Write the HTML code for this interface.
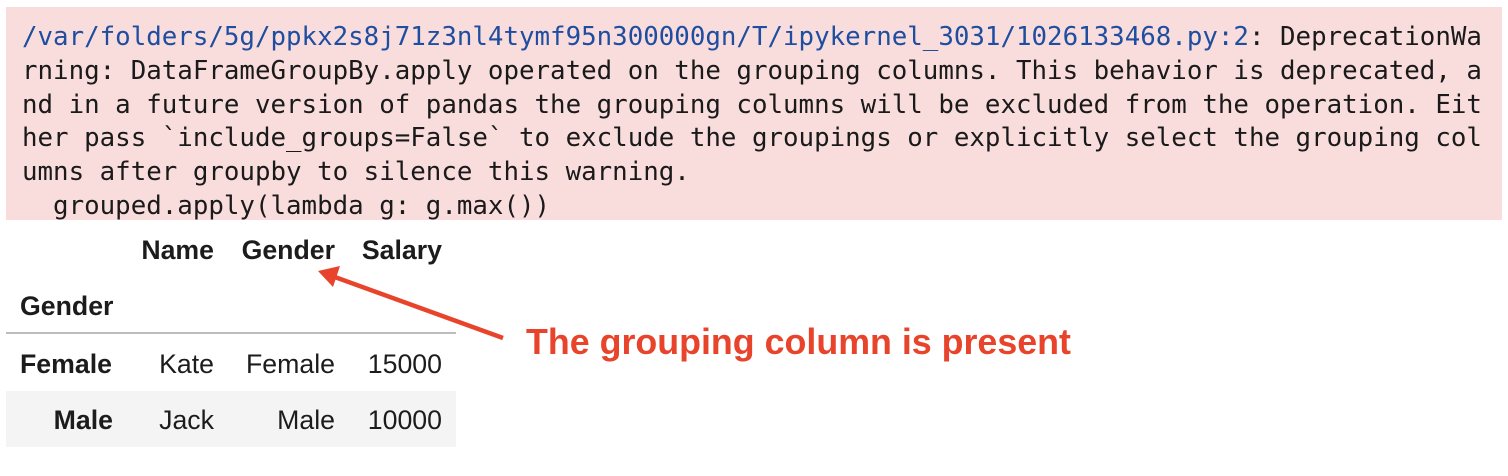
<!DOCTYPE html>
<html><head><meta charset="utf-8"><style>
html,body{margin:0;padding:0;background:#fff;width:1508px;height:476px;overflow:hidden;position:relative}
.warn{position:absolute;left:6px;top:7px;width:1496px;height:213px;background:#f9dddd}
.warn pre{margin:0;position:absolute;left:16px;top:14px;font-family:"DejaVu Sans Mono","Liberation Mono",monospace;font-size:25.8px;line-height:33.8px;color:#1a1a1a;white-space:pre}
.b{color:#1f4ea0}
.t{position:absolute;font-family:"Liberation Sans",Arial,sans-serif;font-size:26.7px;color:#1c1c1c;line-height:1}
.bd{font-weight:bold}
.r{text-align:right}
</style></head><body>
<div class="warn"><pre><span class="b">/var/folders/5g/ppkx2s8j71z3nl4tymf95n300000gn/T/ipykernel_3031/1026133468.py:2</span>: DeprecationWa
rning: DataFrameGroupBy.apply operated on the grouping columns. This behavior is deprecated, a
nd in a future version of pandas the grouping columns will be excluded from the operation. Eit
her pass `include_groups=False` to exclude the groupings or explicitly select the grouping col
umns after groupby to silence this warning.
  grouped.apply(lambda g: g.max())</pre></div>

<div style="position:absolute;left:6px;top:332px;width:450px;height:2px;background:#bdbdbd"></div>
<div style="position:absolute;left:6px;top:391px;width:450px;height:56px;background:#f4f4f4"></div>

<div class="t bd r" style="left:90px;width:124px;top:237px">Name</div>
<div class="t bd r" style="left:200px;width:135px;top:237px">Gender</div>
<div class="t bd r" style="left:330px;width:112px;top:237px">Salary</div>
<div class="t bd" style="left:20px;top:293px">Gender</div>

<div class="t bd" style="left:20px;top:351px">Female</div>
<div class="t r" style="left:90px;width:124px;top:351px">Kate</div>
<div class="t r" style="left:200px;width:135px;top:351px">Female</div>
<div class="t r" style="left:330px;width:112px;top:351px">15000</div>

<div class="t bd r" style="left:6px;width:107px;top:407px">Male</div>
<div class="t r" style="left:90px;width:124px;top:407px">Jack</div>
<div class="t r" style="left:200px;width:135px;top:407px">Male</div>
<div class="t r" style="left:330px;width:112px;top:407px">10000</div>

<svg width="1508" height="476" style="position:absolute;left:0;top:0">
<line x1="503" y1="338" x2="332" y2="276" stroke="#e8442b" stroke-width="4.5"/>
<polygon points="318,271 340,266 333,287" fill="#e8442b"/>
</svg>
<div style="position:absolute;left:526px;top:325px;font-family:'Liberation Sans',Arial,sans-serif;font-weight:bold;font-size:35.8px;color:#e8442b;line-height:1;white-space:nowrap">The grouping column is present</div>
</body></html>
